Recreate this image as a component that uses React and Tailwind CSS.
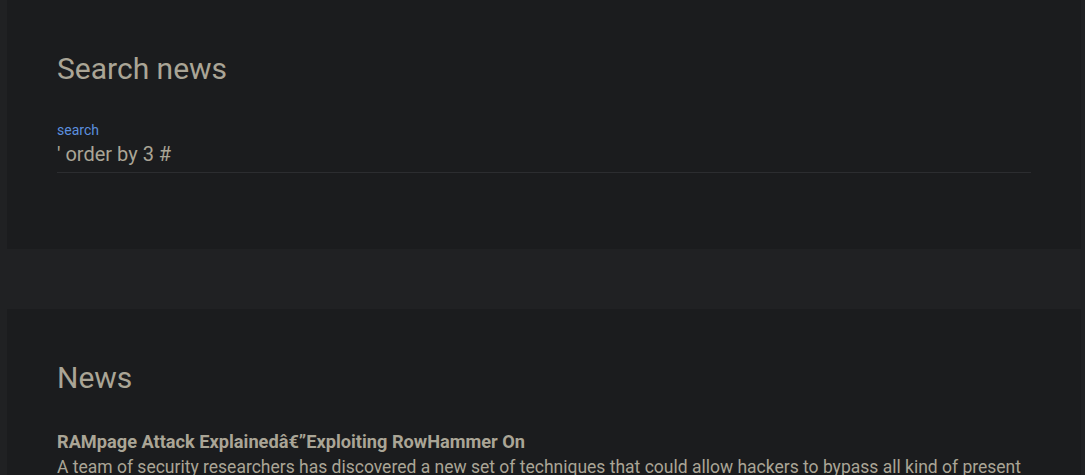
export default function App() {
  return (
    <div
      className="min-h-screen bg-[#202123] pb-10"
      style={{ fontFamily: "Roboto, 'Noto Sans', sans-serif" }}
    >
      {/* Search card */}
      <section className="ml-[7px] mr-[4px] bg-[#1b1c1e] px-[50px] pt-[52px] pb-[76px]">
        <h2 className="text-[30px] leading-[33px] font-normal text-[#aaa596]">Search news</h2>
        <div className="mt-[38px]">
          <label className="block text-[14px] leading-[14px] text-[#5b8fdf]">search</label>
          <div className="mt-[5px] h-[31px] border-b border-[#2c2d30] text-[20px] leading-[25px] text-[#aaa596]">
            ' order by 3 #
          </div>
        </div>
      </section>

      {/* News card */}
      <section className="ml-[7px] mr-[4px] mt-[60px] bg-[#1b1c1e] px-[50px] pt-[52px] pb-[60px]">
        <h2 className="text-[30px] leading-[33px] font-normal text-[#aaa596]">News</h2>
        <article className="mt-[34px]">
          <h3 className="text-[18.2px] leading-[27px] font-bold text-[#aaa596]">
            RAMpage Attack Explainedâ€”Exploiting RowHammer On
          </h3>
          <p className="text-[17.5px] leading-[25px] text-[#aaa596]">
            A team of security researchers has discovered a new set of techniques that could allow hackers to bypass all kind of present
            mitigations put in place to prevent DMA-based RowHammer attacks against Android devices.
          </p>
        </article>
      </section>
    </div>
  )
}
